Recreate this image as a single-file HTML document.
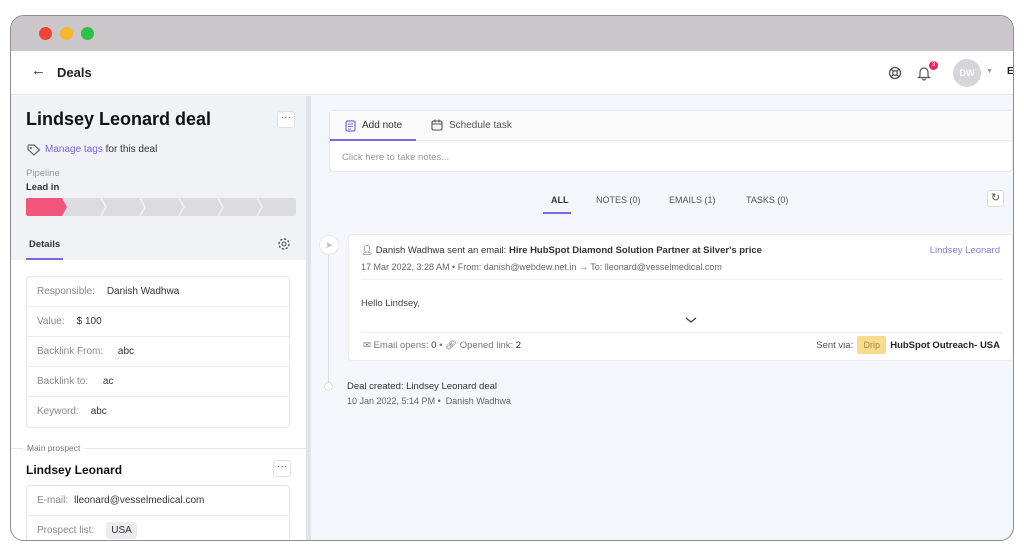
<!DOCTYPE html>
<html><head><style>
*{box-sizing:border-box;margin:0;padding:0}
body{width:1024px;height:551px;background:#fff;font-family:"Liberation Sans",sans-serif;position:relative;overflow:hidden;color:#222}
.win{position:absolute;left:10px;top:15px;width:1004px;height:526px;border:1px solid #8d8d8d;border-radius:14px;overflow:hidden;background:#f5f6fb}
.title{position:absolute;left:0;top:0;right:0;height:35px;background:#cbc6ca}
.dot{position:absolute;top:11px;width:13px;height:13px;border-radius:50%}
.hdr{position:absolute;left:0;top:35px;right:0;height:44px;background:#fff;border-bottom:1px solid #e4e4ea}
.abs{position:absolute}
.left{position:absolute;left:0;top:80px;width:295px;bottom:0;background:#fff}
.lt{position:absolute;left:0;top:0;width:295px;height:164px;background:#f1f2f5}
.sb{position:absolute;left:295px;top:80px;width:5px;bottom:0;background:#e2e3e8}
.card{position:absolute;left:15px;width:264px;border:1px solid #e6e6ea;border-radius:4px;background:#fff}
.row{height:30px;border-bottom:1px solid #ebebef;font-size:10px;line-height:29px;padding-left:10px;color:#333}
.row:last-child{border-bottom:none}
.row span{color:#888;margin-right:12px}
.dots{position:absolute;width:18px;height:17px;border:1px solid #e2e2e6;border-radius:3px;background:#fff;font-size:10px;text-align:center;line-height:11px;color:#555}
.s{font-size:10px}
</style></head><body>
<div class="win">
<div class="title">
<div class="dot" style="left:28px;background:#f0443a"></div>
<div class="dot" style="left:49px;background:#f5b82c"></div>
<div class="dot" style="left:70px;background:#2fc047"></div>
</div>
<div class="hdr">
<div class="abs" style="left:20px;top:11px;font-size:15px;color:#333">←</div>
<div class="abs" style="left:46px;top:14px;font-size:13px;font-weight:bold;color:#222">Deals</div>
<svg class="abs" style="left:877px;top:15px" width="14" height="14" viewBox="0 0 14 14"><circle cx="7" cy="7" r="5.5" fill="none" stroke="#555" stroke-width="1.3"/><circle cx="7" cy="7" r="2.3" fill="none" stroke="#555" stroke-width="1.3"/><path d="M3 3l2.4 2.4M11 3L8.6 5.4M3 11l2.4-2.4M11 11L8.6 8.6" stroke="#555" stroke-width="1.3"/></svg>
<svg class="abs" style="left:906px;top:14px" width="14" height="16" viewBox="0 0 14 16"><path d="M3 11V7a4 4 0 018 0v4l1.5 1.5h-11z M5.5 13.5a1.5 1.5 0 003 0" fill="none" stroke="#555" stroke-width="1.2"/></svg>
<div class="abs" style="left:918px;top:10px;width:9px;height:9px;border-radius:50%;background:#f0245a;color:#fff;font-size:6px;text-align:center;line-height:9px">3</div>
<div class="abs" style="left:942px;top:8px;width:28px;height:28px;border-radius:50%;background:#d6d6d8;color:#fff;font-size:9px;font-weight:bold;text-align:center;line-height:28px">DW</div>
<div class="abs" style="left:975px;top:17px;font-size:7px;color:#999">▼</div>
<div class="abs" style="left:996px;top:15px;font-size:10px;font-weight:bold">E</div>
</div>
<div class="left">
<div class="lt"></div>
<div class="abs" style="left:15px;top:13px;font-size:18px;font-weight:bold;color:#111">Lindsey Leonard deal</div>
<div class="dots" style="left:266px;top:15px">···</div>
<svg class="abs" style="left:16px;top:48px" width="14" height="12" viewBox="0 0 14 12"><path d="M1 2v3.5l6 5.5 5.5-5L7 1H2z" fill="none" stroke="#666" stroke-width="1.2"/><circle cx="4" cy="4" r="1" fill="#666"/></svg>
<div class="abs s" style="left:34px;top:48px;color:#333"><span style="color:#7b68e0">Manage tags</span> for this deal</div>
<div class="abs" style="left:15px;top:72px;font-size:9.5px;color:#999">Pipeline</div>
<div class="abs" style="left:15px;top:86px;font-size:9.5px;font-weight:bold;color:#333">Lead in</div>
<svg class="abs" style="left:15px;top:102px" width="270" height="18" viewBox="0 0 270 18">
<rect x="0" y="0" width="270" height="18" rx="2" fill="#dcdcdf"/>
<path d="M2 0H36l5 9-5 9H2a2 2 0 01-2-2V2a2 2 0 012-2z" fill="#f2557a"/>
<path d="M75 0l5 9-5 9M114 0l5 9-5 9M153 0l5 9-5 9M192 0l5 9-5 9M231 0l5 9-5 9" fill="none" stroke="#f1f2f5" stroke-width="1.5"/>
</svg>
<div class="abs" style="left:18px;top:143px;font-size:9.5px;font-weight:bold;color:#333">Details</div>
<div class="abs" style="left:15px;top:162px;width:37px;height:2px;background:#7b68e0"></div>
<svg class="abs" style="left:266px;top:141px" width="14" height="14" viewBox="0 0 14 14"><circle cx="7" cy="7" r="2" fill="none" stroke="#555" stroke-width="1.1"/><circle cx="7" cy="7" r="5" fill="none" stroke="#555" stroke-width="1.4" stroke-dasharray="2.2 1.7"/></svg>
<div class="card" style="top:180px">
<div class="row"><span>Responsible:</span>Danish Wadhwa</div>
<div class="row"><span>Value:</span>$ 100</div>
<div class="row"><span>Backlink From:</span>&nbsp;abc</div>
<div class="row"><span>Backlink to:</span>&nbsp;ac</div>
<div class="row"><span>Keyword:</span>abc</div>
</div>
<div class="abs" style="left:0;top:352px;width:295px;height:1px;background:#e6e6ea"></div>
<div class="abs" style="left:12px;top:347px;padding:0 4px;background:#fff;font-size:8.5px;color:#777">Main prospect</div>
<div class="abs" style="left:15px;top:367px;font-size:12px;font-weight:bold;color:#111">Lindsey Leonard</div>
<div class="dots" style="left:262px;top:364px">···</div>
<div class="card" style="top:389px;height:70px">
<div class="row"><span style="margin-right:6px">E-mail:</span>lleonard@vesselmedical.com</div>
<div class="row"><span>Prospect list:</span><b style="font-weight:normal;background:#ececef;padding:3px 5px;border-radius:3px">USA</b></div>
</div>
</div>
<div class="sb"></div>
<div class="abs" style="left:318px;top:94px;width:684px;height:62px;background:#fff;border:1px solid #e8e8ee;border-radius:4px">
<div class="abs" style="left:0;top:0;width:682px;height:30px;background:#fafafa;border-bottom:1px solid #eee"></div>
<svg class="abs" style="left:15px;top:9px" width="11" height="12" viewBox="0 0 11 12"><rect x="1" y="1" width="9" height="10" rx="1.5" fill="none" stroke="#7b68e0" stroke-width="1.2"/><path d="M3 4h5M3 6.5h5M3 9h3" stroke="#7b68e0" stroke-width="1"/></svg>
<div class="abs s" style="left:32px;top:9px;color:#333">Add note</div>
<div class="abs" style="left:0;top:28px;width:86px;height:2px;background:#7b68e0"></div>
<svg class="abs" style="left:101px;top:8px" width="12" height="12" viewBox="0 0 12 12"><rect x="1" y="2" width="10" height="9" rx="1.5" fill="none" stroke="#555" stroke-width="1.1"/><path d="M1 5h10M4 0.5v3M8 0.5v3" stroke="#555" stroke-width="1.1"/></svg>
<div class="abs s" style="left:119px;top:9px;color:#555">Schedule task</div>
<div class="abs" style="left:12px;top:41px;font-size:9.5px;color:#999">Click here to take notes...</div>
</div>
<div class="abs" style="left:540px;top:179px;font-size:9px;font-weight:bold;color:#333">ALL</div>
<div class="abs" style="left:532px;top:196px;width:28px;height:2px;background:#7b68e0"></div>
<div class="abs" style="left:585px;top:179px;font-size:9px;color:#555">NOTES (0)</div>
<div class="abs" style="left:658px;top:179px;font-size:9px;color:#555">EMAILS (1)</div>
<div class="abs" style="left:735px;top:179px;font-size:9px;color:#555">TASKS (0)</div>
<div class="abs" style="left:976px;top:174px;width:17px;height:17px;border:1px solid #ddd;border-radius:3px;background:#fff;font-size:11px;text-align:center;line-height:15px;color:#555">↻</div>
<div class="abs" style="left:317px;top:238px;width:1px;height:132px;background:#ddd"></div>
<div class="abs" style="left:308px;top:219px;width:20px;height:20px;border-radius:50%;background:#fff;border:1px solid #e8e8ee;font-size:9px;text-align:center;line-height:18px;color:#bbb">➤</div>
<div class="abs" style="left:313px;top:366px;width:9px;height:9px;border-radius:50%;background:#fff;border:1px solid #ddd"></div>
<div class="abs" style="left:337px;top:218px;width:665px;height:127px;background:#fff;border:1px solid #ececf1;border-radius:4px">
<div class="abs" style="left:12px;top:10px;font-size:9.5px;color:#333">👤︎ Danish Wadhwa sent an email: <b>Hire HubSpot Diamond Solution Partner at Silver's price</b></div>
<div class="abs" style="right:12px;top:10px;font-size:9.5px;color:#8a7de0">Lindsey Leonard</div>
<div class="abs" style="left:12px;top:27px;font-size:9px;color:#666">17 Mar 2022, 3:28 AM • From: danish@webdew.net.in → To: lleonard@vesselmedical.com</div>
<div class="abs" style="left:12px;top:44px;width:642px;height:1px;background:#eee"></div>
<div class="abs" style="left:12px;top:63px;font-size:9.5px;color:#444">Hello Lindsey,</div>
<svg class="abs" style="left:336px;top:82px" width="12" height="6" viewBox="0 0 12 6"><path d="M1 1l5 4 5-4" fill="none" stroke="#444" stroke-width="1.4"/></svg>
<div class="abs" style="left:12px;top:97px;width:642px;height:1px;background:#eee"></div>
<div class="abs" style="left:14px;top:105px;font-size:9.5px;color:#777">✉ Email opens: <span style="color:#333">0</span> • 🔗︎ Opened link: <span style="color:#333">2</span></div>
<div class="abs" style="right:12px;top:101px;height:18px;display:flex;align-items:center;font-size:9.5px">
<span style="color:#555;margin-right:4px">Sent via:</span>
<span style="width:29px;height:18px;background:#fadb8e;border-radius:2px;font-size:9px;line-height:18px;text-align:center;color:#a88a40;margin-right:4px">Drip</span>
<b style="color:#222">HubSpot Outreach- USA</b>
</div>
</div>
<div class="abs" style="left:336px;top:365px;font-size:9.5px;color:#333">Deal created: Lindsey Leonard deal</div>
<div class="abs" style="left:336px;top:380px;font-size:9px;color:#666">10 Jan 2022, 5:14 PM • &nbsp;Danish Wadhwa</div>
</div>
</body></html>
